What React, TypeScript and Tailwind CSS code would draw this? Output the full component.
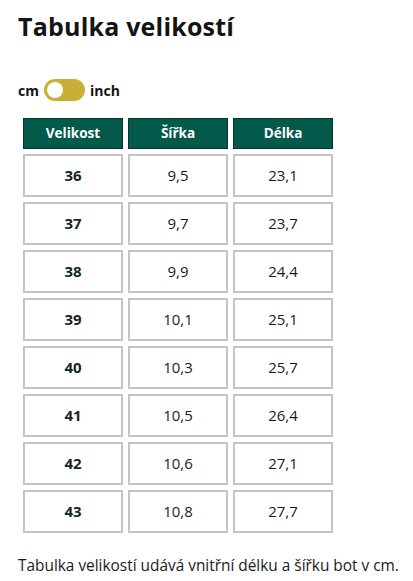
import React from "react";

const rows = [
  ["36", "9,5", "23,1"],
  ["37", "9,7", "23,7"],
  ["38", "9,9", "24,4"],
  ["39", "10,1", "25,1"],
  ["40", "10,3", "25,7"],
  ["41", "10,5", "26,4"],
  ["42", "10,6", "27,1"],
  ["43", "10,8", "27,7"],
];

export default function App() {
  return (
    <div className="min-h-screen overflow-hidden bg-white px-[18px] pt-[10px] text-[#1a1a1a] [font-family:'Open_Sans','Liberation_Sans',sans-serif]">
      <h1 className="text-[25px] font-bold leading-[32px] tracking-[0.2px] text-[#141414]">
        Tabulka velikostí
      </h1>

      <div className="mt-[37px] flex items-center gap-[5px] text-[14px] font-bold text-[#141414]">
        <span>cm</span>
        <span className="flex h-[22px] w-[41px] items-center rounded-full bg-[#c8b038] px-[3px]">
          <span className="h-[16px] w-[16px] rounded-full bg-white" />
        </span>
        <span>inch</span>
      </div>

      <table className="mt-[12px] border-separate border-spacing-[5px]">
        <thead>
          <tr>
            {["Velikost", "Šířka", "Délka"].map((h) => (
              <th
                key={h}
                className="h-[31px] w-[100px] border border-[#0b3328] bg-[#03594a] text-center text-[13.5px] font-bold text-white"
              >
                {h}
              </th>
            ))}
          </tr>
        </thead>
        <tbody>
          {rows.map((r) => (
            <tr key={r[0]}>
              <td className="h-[43px] w-[100px] border-2 border-[#c4c4c4] text-center text-[15px] font-bold text-[#102a22]">
                {r[0]}
              </td>
              <td className="h-[43px] w-[100px] border-2 border-[#c4c4c4] text-center text-[15px] text-[#1a1a1a]">
                {r[1]}
              </td>
              <td className="h-[43px] w-[100px] border-2 border-[#c4c4c4] text-center text-[15px] text-[#1a1a1a]">
                {r[2]}
              </td>
            </tr>
          ))}
        </tbody>
      </table>

      <p className="mt-[16px] whitespace-nowrap text-[15.4px] text-[#1a1a1a]">
        Tabulka velikostí udává vnitřní délku a šířku bot v cm.
      </p>
    </div>
  );
}
